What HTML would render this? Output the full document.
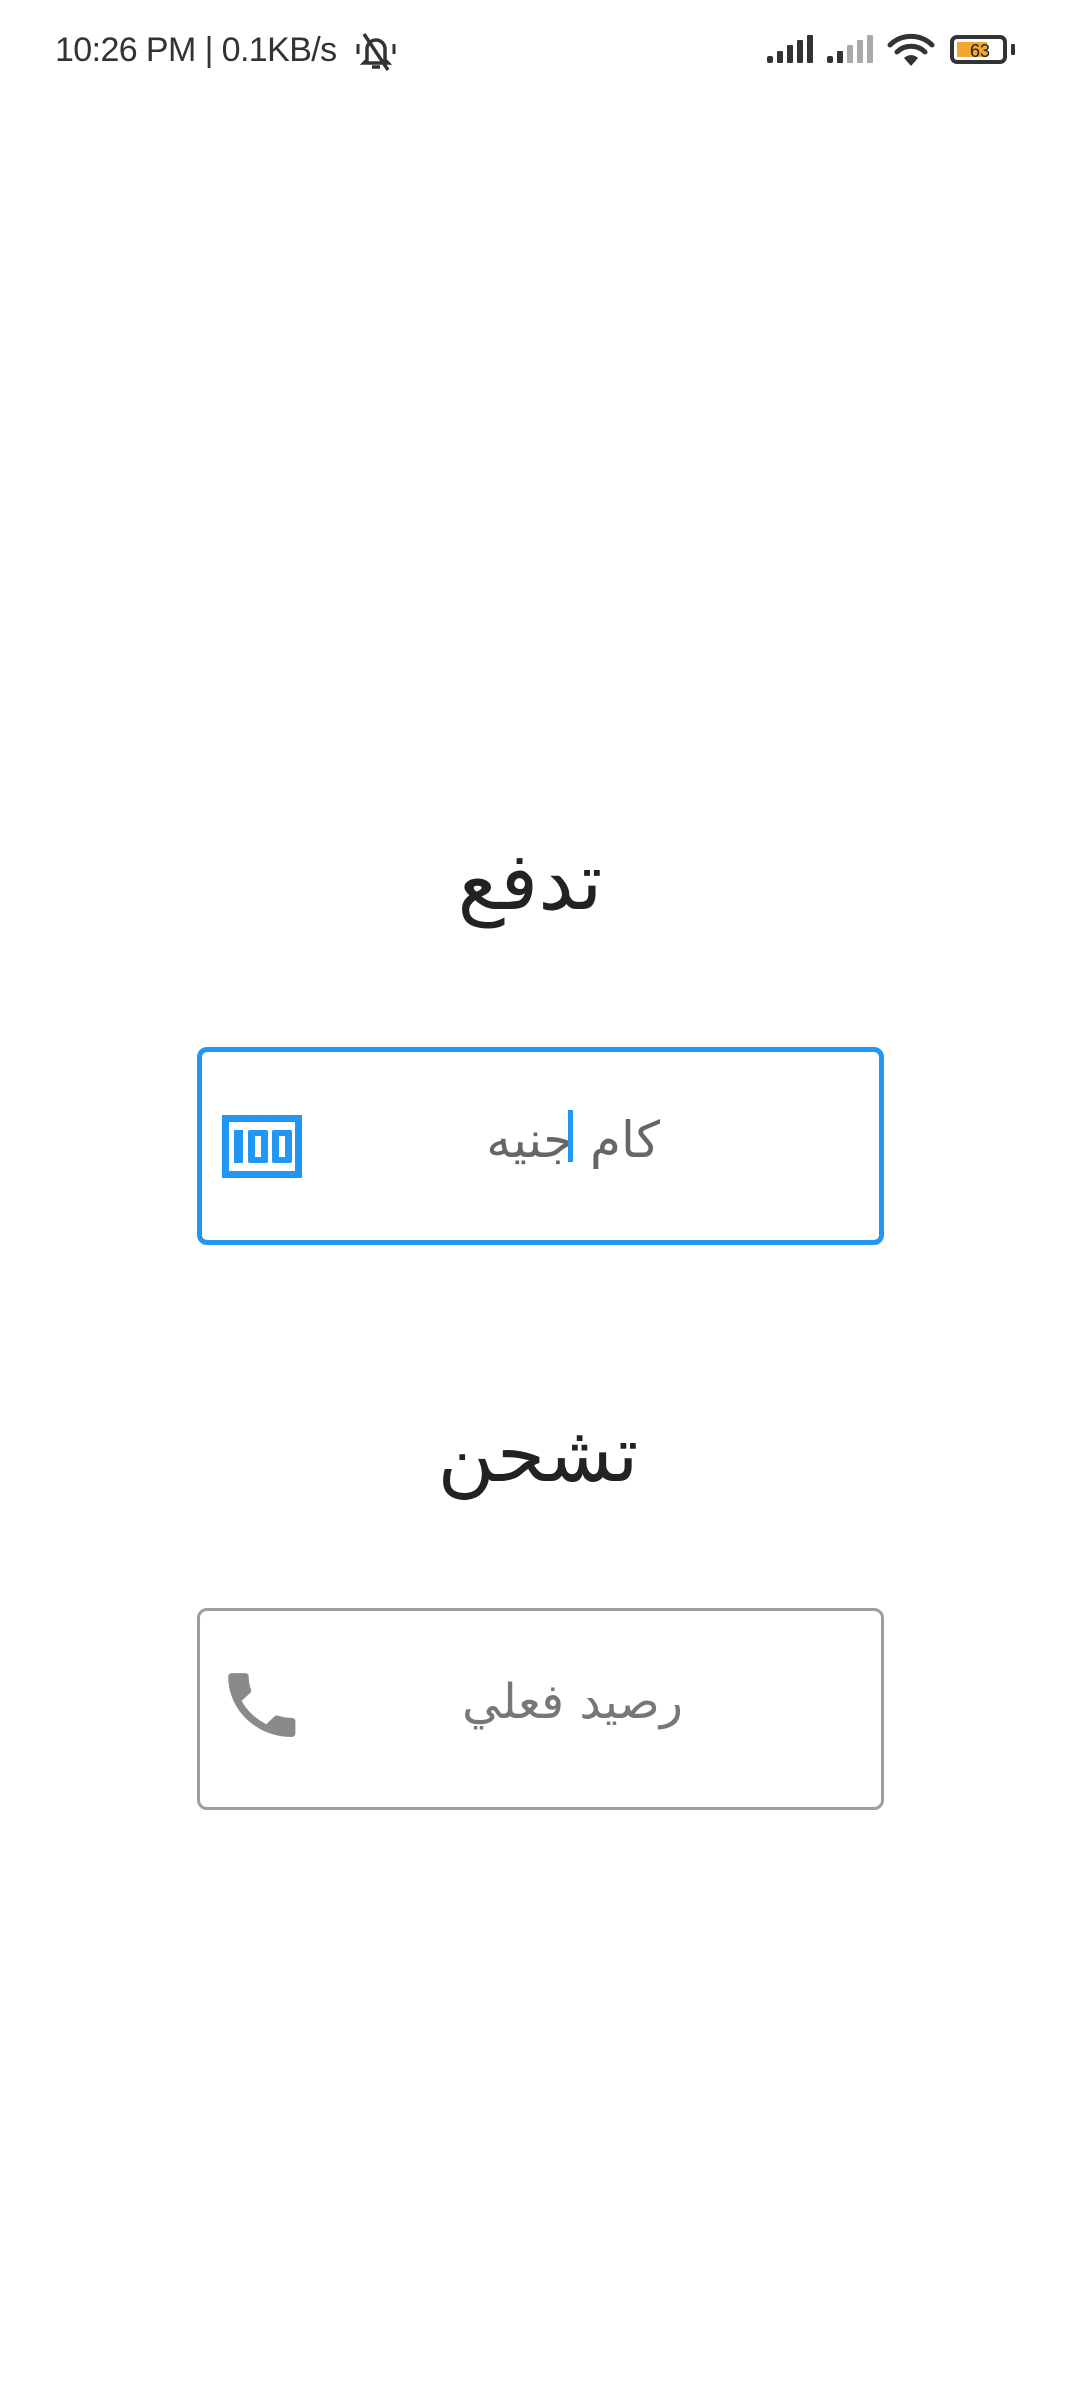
<!DOCTYPE html>
<html><head><meta charset="utf-8">
<style>
html,body{margin:0;padding:0;background:#fff;}
body{width:1080px;height:2400px;position:relative;overflow:hidden;font-family:"Liberation Sans","DejaVu Sans",sans-serif;}
.abs{position:absolute;}
.status{left:55px;top:31px;font-size:34px;color:#333;letter-spacing:-0.6px;}
.title{left:0;width:1080px;text-align:center;font-family:"DejaVu Sans",sans-serif;color:#222;line-height:1;}
.box{left:197px;width:687px;box-sizing:border-box;border-radius:10px;}
.ph{font-family:"DejaVu Sans",sans-serif;font-size:50px;line-height:1;white-space:nowrap;}
</style></head><body>
<div class="abs status">10:26 PM | 0.1KB/s</div>
<svg class="abs" style="left:354px;top:30px" width="44" height="44" viewBox="0 0 44 44">
<path d="M13 30 V19 a9 9 0 0 1 18 0 V30 l3 3 H10 z" fill="none" stroke="#333" stroke-width="3.5"/>
<path d="M18 37 h8" stroke="#333" stroke-width="3.5"/>
<path d="M10 4 L34 40" stroke="#333" stroke-width="3.5"/>
<path d="M4 14 v10 M40 14 v10" stroke="#333" stroke-width="3"/>
</svg>
<svg class="abs" style="left:760px;top:30px" width="270" height="40" viewBox="760 30 270 40">
<g fill="#333"><rect x="767" y="56" width="6" height="7" rx="2"/><rect x="777" y="51" width="6" height="12" rx="1"/><rect x="787" y="45" width="6" height="18" rx="1"/><rect x="797" y="40" width="6" height="23" rx="1"/><rect x="807" y="35" width="6" height="28" rx="1"/></g>
<g><rect x="827" y="56" width="6" height="7" rx="2" fill="#333"/><rect x="837" y="51" width="6" height="12" rx="1" fill="#333"/><rect x="847" y="45" width="6" height="18" rx="1" fill="#aaa"/><rect x="857" y="40" width="6" height="23" rx="1" fill="#aaa"/><rect x="867" y="35" width="6" height="28" rx="1" fill="#aaa"/></g>
<g fill="none" stroke="#333" stroke-width="5" stroke-linecap="round"><path d="M890 45 a30 30 0 0 1 42 0"/><path d="M897 52 a20 20 0 0 1 28 0"/></g>
<path d="M904 58 a10 10 0 0 1 14 0 L911 66 z" fill="#333"/>
<rect x="952" y="37" width="53" height="25" rx="5" fill="none" stroke="#333" stroke-width="4"/>
<rect x="957" y="42" width="30" height="15" fill="#f0a830"/>
<rect x="1011" y="44" width="4" height="11" rx="1" fill="#333"/>
<text x="980" y="57" font-size="18" font-family="Liberation Sans" fill="#222" text-anchor="middle">63</text>
</svg>

<div class="abs title" style="top:842px;font-size:80px;left:-10px">تدفع</div>
<div class="abs box" style="top:1047px;height:198px;border:5px solid #2196F3;"></div>
<svg class="abs" style="left:222px;top:1115px" width="80" height="63" viewBox="0 0 80 63">
<rect x="3.5" y="3.5" width="73" height="56" fill="none" stroke="#2196F3" stroke-width="7"/>
<rect x="12" y="15" width="9" height="33" fill="#2196F3"/>
<rect x="26" y="15" width="20" height="33" rx="2" fill="#2196F3"/><rect x="33" y="21" width="6" height="21" fill="#fff"/>
<rect x="50" y="15" width="20" height="33" rx="2" fill="#2196F3"/><rect x="57" y="21" width="6" height="21" fill="#fff"/>
</svg>
<div class="abs ph" style="left:488px;width:172px;top:1115px;color:#666;text-align:center" dir="rtl">كام جنيه</div>
<div class="abs" style="left:568px;top:1110px;width:5px;height:52px;background:#2196F3"></div>

<div class="abs title" style="top:1416px;font-size:78px;left:-2px">تشحن</div>
<div class="abs box" style="top:1608px;height:202px;border:3px solid #9e9e9e;"></div>
<svg class="abs" style="left:222px;top:1672px" width="80" height="76" viewBox="0 0 24 24" preserveAspectRatio="none">
<path d="M6.6 10.8c1.4 2.8 3.8 5.1 6.6 6.6l2.2-2.2c.3-.3.7-.4 1-.2 1.1.4 2.300.6 3.6.6.6 0 1 .4 1 1V20c0 .6-.4 1-1 1-9.4 0-17-7.6-17-17 0-.6.4-1 1-1h3.5c.6 0 1 .4 1 1 0 1.3.2 2.5.6 3.6.1.3 0 .7-.2 1l-2.3 2.2z" fill="#8a8a8a" transform="translate(-1.5,-3) scale(1.12)"/>
</svg>
<div class="abs ph" style="left:455px;width:235px;top:1678px;color:#777;text-align:center;font-size:48px" dir="rtl">رصيد فعلي</div>
</body></html>
